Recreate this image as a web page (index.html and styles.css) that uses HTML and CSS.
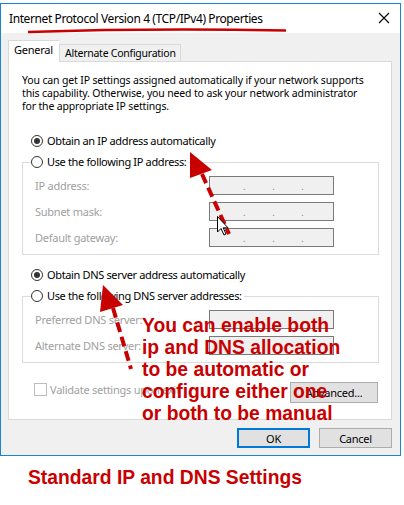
FILE: index.html
```html
<!DOCTYPE html>
<html>
<head>
<meta charset="utf-8">
<link rel="stylesheet" href="styles.css">
</head>
<body>
<div class="page">
  <div class="window">
    <div class="titlebar">
      <span class="title">Internet Protocol Version 4 (TCP/IPv4) Properties</span>
      <svg class="close" width="12" height="12" viewBox="0 0 12 12"><path d="M1 1L11 11M11 1L1 11" stroke="#000" stroke-width="1.1" fill="none"/></svg>
    </div>
    <div class="body">
      <div class="tabs">
        <div class="tab active">General</div>
        <div class="tab">Alternate Configuration</div>
      </div>
      <div class="panel">
        <p class="intro">You can get IP settings assigned automatically if your network supports this capability. Otherwise, you need to ask your network administrator for the appropriate IP settings.</p>

        <div class="radio-row first"><span class="radio checked"></span>Obtain an IP address automatically</div>
        <fieldset class="group">
          <legend class="radio-row"><span class="radio"></span>Use the following IP address:</legend>
          <div class="fields">
            <span class="lbl">IP address:</span><span class="ipbox"><i>.</i><i>.</i><i>.</i></span>
            <span class="lbl">Subnet mask:</span><span class="ipbox"><i>.</i><i>.</i><i>.</i></span>
            <span class="lbl">Default gateway:</span><span class="ipbox"><i>.</i><i>.</i><i>.</i></span>
          </div>
        </fieldset>

        <div class="radio-row dns"><span class="radio checked"></span>Obtain DNS server address automatically</div>
        <fieldset class="group">
          <legend class="radio-row"><span class="radio"></span>Use the following DNS server addresses:</legend>
          <div class="fields">
            <span class="lbl">Preferred DNS server:</span><span class="ipbox"></span>
            <span class="lbl">Alternate DNS server:</span><span class="ipbox"></span>
          </div>
        </fieldset>

        <div class="bottom-row">
          <span class="check"></span><span class="lbl validate">Validate settings upon exit</span>
          <span class="btn adv">Advanced...</span>
        </div>
      </div>
      <div class="buttons">
        <span class="btn ok">OK</span>
        <span class="btn">Cancel</span>
      </div>
    </div>
  </div>
  <div class="caption">Standard IP and DNS Settings</div>

  <div class="note">You can enable both<br>ip and DNS allocation<br>to be automatic or<br>configure either one<br>or both to be manual</div>

  <svg class="overlay" width="404" height="505" viewBox="0 0 404 505">
    <path d="M28 32 Q150 28 286 30.5" stroke="#c80000" stroke-width="2.6" fill="none"/>
    <polygon points="190,152 212,170 190,178" fill="#c80000"/>
    <path d="M202 174 L229 234" stroke="#c80000" stroke-width="4" stroke-dasharray="10 5" fill="none"/>
    <polygon points="103,285 123,305 100,312" fill="#c80000"/>
    <path d="M113 308 L131 369" stroke="#c80000" stroke-width="4" stroke-dasharray="10 5" fill="none"/>
    <path d="M217.5 216.5 L217.5 232 L221 228.5 L224 235 L226 234 L223.2 227.8 L228 227.8 Z" fill="#fff" stroke="#000" stroke-width="1"/>
  </svg>
</div>
</body>
</html>
```

FILE: styles.css
```css
* { box-sizing: border-box; }
html, body { margin: 0; padding: 0; background: #fff; }
body { width: 404px; height: 505px; overflow: hidden; font-family: "Noto Sans", "Open Sans", sans-serif; font-size: 10.5px; letter-spacing: -0.25px; color: #000; }

.page { position: relative; width: 404px; height: 505px; padding-top: 3px; }

.window { width: 401px; height: 453px; border: 1px solid #1883d7; background: #f0f0f0; display: flex; flex-direction: column; }

.titlebar { height: 29px; background: #fff; display: flex; align-items: center; justify-content: space-between; padding: 0 10px 0 8px; }
.title { font-size: 12px; letter-spacing: -0.4px; }
.close { display: block; margin-top: -2px; }

.body { padding: 7px 8px 0 7px; display: flex; flex-direction: column; }

.tabs { display: flex; align-items: flex-end; height: 21px; position: relative; z-index: 1; }
.tab { height: 17px; padding: 0 4px 0 5px; border: 1px solid #d9d9d9; border-bottom: none; background: #f0f0f0; line-height: 17px; }
.tab.active { height: 22px; margin-bottom: -1px; background: #fff; padding: 0 5px; width: 51px; line-height: 18px; border-right: none; font-size: 11px; }

.panel { height: 359px; background: #fff; border: 1px solid #d9d9d9; padding: 12px 12px 0 13px; }

.intro { margin: 0; line-height: 13px; width: 350px; letter-spacing: -0.15px; }

.radio-row { display: flex; align-items: center; height: 14px; line-height: 14px; white-space: nowrap; font-size: 11px; letter-spacing: -0.35px; }
.radio-row.first { margin-top: 21px; margin-left: 9px; }
.radio-row.dns { margin-top: 13px; margin-left: 9px; }

.radio { width: 12px; height: 12px; border: 1px solid #333; border-radius: 50%; margin-right: 4px; background: #fff; position: relative; flex: none; }
.radio.checked::after { content: ""; position: absolute; left: 2px; top: 2px; width: 6px; height: 6px; border-radius: 50%; background: #333; }

.group { margin: 7px 0 0 0; padding: 0 0 7px 12px; border: 1px solid #dcdcdc; width: 357px; min-width: 0; }
.group legend { padding: 0 2px 0 0; margin-left: -4px; }

.fields { display: grid; grid-template-columns: 174px 125px; row-gap: 7px; align-items: center; margin-top: 7px; }
.lbl { color: #a0a0a0; font-size: 11px; }
.ipbox { height: 19px; border: 1px solid #7a7a7a; background: #f0f0f0; display: flex; padding-left: 33px; gap: 27px; color: #777; }
.ipbox i { font-style: normal; line-height: 19px; font-size: 9px; }

.bottom-row { display: flex; align-items: center; margin-top: 19px; height: 20px; padding-left: 12px; }
.check { width: 13px; height: 13px; border: 1px solid #bcbcbc; background: #fff; margin-right: 3px; margin-top: -6px; }
.validate { margin-top: -6px; flex: 1; }

.btn { display: flex; align-items: center; justify-content: center; height: 21px; border: 1px solid #adadad; background: #e1e1e1; font-size: 11px; }
.adv { width: 88px; margin-right: 1px; }

.buttons { display: flex; justify-content: flex-end; gap: 9px; margin-top: 8px; }
.buttons .btn { width: 73px; height: 20px; }
.buttons .ok { border: 2px solid #0078d7; }

.caption { margin: 11px 0 0 28px; font-family: "Liberation Sans", Arial, sans-serif; font-weight: bold; font-size: 19.3px; letter-spacing: 0; color: #c80000; }

.note { position: absolute; left: 142px; top: 315px; font-family: "Liberation Sans", Arial, sans-serif; font-weight: bold; font-size: 19.3px; line-height: 22px; letter-spacing: 0; color: #c80000; white-space: nowrap; }

.overlay { position: absolute; left: 0; top: 0; pointer-events: none; }
```
